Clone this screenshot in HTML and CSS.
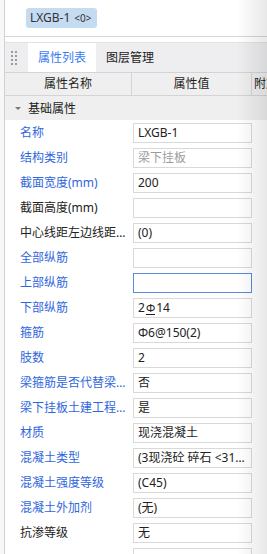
FILE: index.html
```html
<!DOCTYPE html>
<html lang="zh-CN">
<head>
    <meta charset="UTF-8">
    <title>属性列表</title>
    <link rel="stylesheet" href="styles.css">
</head>
<body>
    <div class="pane">
        <div class="selection">
            <span class="chip">LXGB-1 <small>&lt;0&gt;</small></span>
        </div>

        <div class="tabs">
            <div class="grip">
                <i></i><i></i><i></i><i></i><i></i><i></i><i></i><i></i>
            </div>
            <div class="tab active">属性列表</div>
            <div class="tab">图层管理</div>
        </div>

        <div class="grid head">
            <div class="cell">属性名称</div>
            <div class="cell">属性值</div>
            <div class="cell extra">附加</div>
        </div>
        <div class="group"><span class="caret"></span>基础属性</div>

        <div class="rows">
            <div class="grid row"><div class="name link">名称</div><div class="val">LXGB-1</div></div>
            <div class="grid row"><div class="name link">结构类别</div><div class="val muted">梁下挂板</div></div>
            <div class="grid row"><div class="name link">截面宽度(mm)</div><div class="val">200</div></div>
            <div class="grid row"><div class="name">截面高度(mm)</div><div class="val"></div></div>
            <div class="grid row"><div class="name">中心线距左边线距离(mm)</div><div class="val">(0)</div></div>
            <div class="grid row"><div class="name link">全部纵筋</div><div class="val"></div></div>
            <div class="grid row"><div class="name link">上部纵筋</div><div class="val focus"></div></div>
            <div class="grid row"><div class="name link">下部纵筋</div><div class="val">2<span class="bar">Φ</span>14</div></div>
            <div class="grid row"><div class="name link">箍筋</div><div class="val">Φ6@150(2)</div></div>
            <div class="grid row"><div class="name link">肢数</div><div class="val">2</div></div>
            <div class="grid row"><div class="name link">梁箍筋是否代替梁下挂板箍筋</div><div class="val">否</div></div>
            <div class="grid row"><div class="name link">梁下挂板土建工程量计算规则</div><div class="val">是</div></div>
            <div class="grid row"><div class="name link">材质</div><div class="val">现浇混凝土</div></div>
            <div class="grid row"><div class="name link">混凝土类型</div><div class="val">(3现浇砼 碎石 &lt;31.5mm 32.5级坍落度35~50mm)</div></div>
            <div class="grid row"><div class="name link">混凝土强度等级</div><div class="val">(C45)</div></div>
            <div class="grid row"><div class="name link">混凝土外加剂</div><div class="val">(无)</div></div>
            <div class="grid row"><div class="name">抗渗等级</div><div class="val">无</div></div>
            <div class="grid row"><div class="name"></div><div class="val"></div></div>
        </div>
    </div>
    <div class="edge-shade"></div>
</body>
</html>
```

FILE: styles.css
```css
body {
    margin: 0;
    padding-left: 4px;
    background: #f7f7f7;
    font-family: "Noto Sans", "Noto Sans CJK SC", sans-serif;
    font-size: 12px;
    color: #222;
    overflow: hidden;
}
.pane {
    border-left: 1px solid #d2d2d2;
    background: #fff;
    min-height: 554px;
}

.selection {
    height: 37px;
    padding: 8px 0 0 21px;
    box-sizing: border-box;
    border-bottom: 1px solid #d6d6d6;
}
.chip {
    display: inline-flex;
    align-items: center;
    height: 20px;
    padding: 0 5px 0 4px;
    border-radius: 3px;
    background: #c5dbf2;
    color: #333;
    line-height: 20px;
}
.chip small { font-size: 10px; margin-left: 4px; }

.tabs {
    display: flex;
    align-items: stretch;
    height: 30px;
    margin-top: 5px;
    background: #eeeef0;
    border-top: 1px solid #e2e2e2;
    box-sizing: border-box;
}
.grip {
    display: grid;
    grid-template-columns: 2px 2px;
    grid-template-rows: repeat(4, 2px);
    gap: 2px 2px;
    align-content: center;
    margin: 0 11px 0 6px;
}
.grip i { background: #9a9a9a; }
.tab {
    padding: 0 10px;
    line-height: 29px;
    color: #222;
}
.tab.active {
    background: #fff;
    color: #3a7df0;
}

.grid {
    display: grid;
    grid-template-columns: 127px 120px 1fr;
}
.head {
    height: 24px;
    background: #efefef;
    border-top: 1px solid #d4d4d4;
    border-bottom: 1px solid #d4d4d4;
    box-sizing: border-box;
    color: #1e1e1e;
}
.head .cell {
    line-height: 22px;
    text-align: center;
    border-right: 1px solid #d4d4d4;
    white-space: nowrap;
    overflow: hidden;
}
.head .cell.extra {
    text-align: left;
    padding-left: 2px;
    border-right: none;
}
.group {
    display: flex;
    align-items: center;
    height: 24px;
    background: #efefef;
    padding-left: 10px;
    color: #222;
}
.caret {
    width: 0;
    height: 0;
    border-left: 3px solid transparent;
    border-right: 3px solid transparent;
    border-top: 3px solid #777;
    margin-right: 7px;
}

.row { height: 25px; }
.name {
    padding: 0 6px 0 15px;
    line-height: 25px;
    white-space: nowrap;
    overflow: hidden;
    text-overflow: ellipsis;
}
.name.link { color: #2f66dd; }
.val {
    margin: 3px 0 2px 1px;
    height: 20px;
    border: 1px solid #d9d9d9;
    box-sizing: border-box;
    padding: 0 4px;
    line-height: 18px;
    white-space: nowrap;
    overflow: hidden;
    text-overflow: ellipsis;
}
.val.muted { color: #9c9c9c; }
.val.focus { border-color: #5b8ad9; }
.bar {
    display: inline-block;
    border-bottom: 1px solid #222;
    line-height: 12px;
    margin: 0 1px;
    font-size: 11px;
}

.edge-shade {
    position: fixed;
    top: 0;
    right: 0;
    bottom: 0;
    width: 30px;
    pointer-events: none;
    background: linear-gradient(to right, rgba(0, 0, 0, 0), rgba(0, 0, 0, 0.09));
}
```
